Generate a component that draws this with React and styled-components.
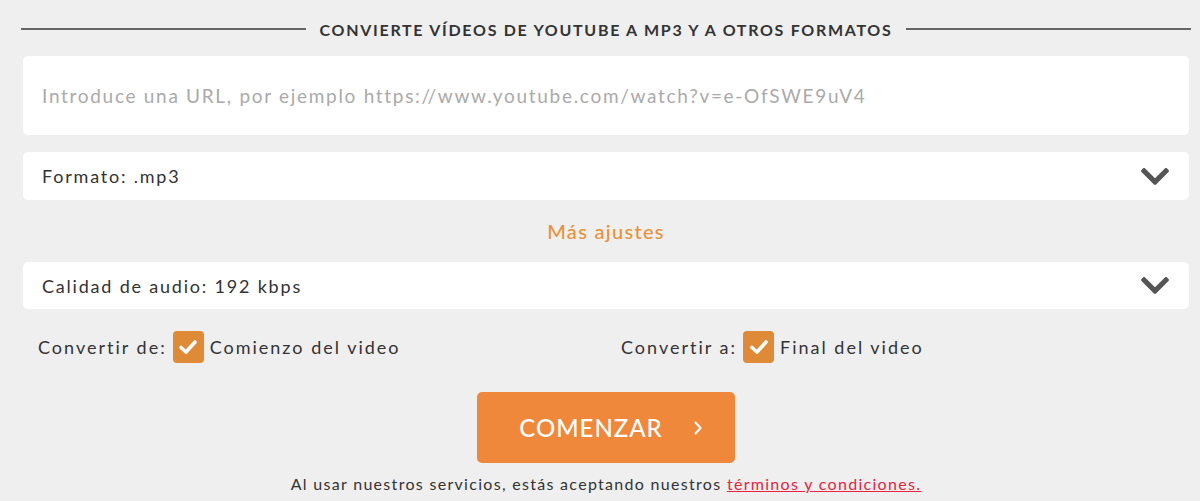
import React from "react";
import styled, { createGlobalStyle } from "styled-components";

const GlobalStyle = createGlobalStyle`
  html, body { margin: 0; padding: 0; background: #efefef; }
  body { font-family: Lato, "Open Sans", "Liberation Sans", sans-serif; color: #333; }
  * { box-sizing: border-box; }
`;

const Page = styled.div`
  padding: 19px 11px 0 23px;
  width: 1200px;
`;

const HeadingRow = styled.div`
  display: flex;
  align-items: center;
  gap: 14px;
  margin: 0 -2px;
  height: 20px;
`;

const Rule = styled.span`
  flex: 1;
  height: 2px;
  background: #666;
`;

const Heading = styled.h2`
  margin: 0;
  font-size: 16px;
  font-weight: 700;
  letter-spacing: 1.7px;
  color: #333;
  text-transform: uppercase;
  white-space: nowrap;
`;

const UrlBox = styled.div`
  margin-top: 17px;
  height: 79px;
  background: #fff;
  border-radius: 5px;
  display: flex;
  align-items: center;
  padding: 0 19px;
`;

const UrlInput = styled.input`
  flex: 1;
  border: 0;
  outline: 0;
  background: transparent;
  font-family: inherit;
  font-size: 19px;
  letter-spacing: 1.7px;
  color: #333;
  padding: 0;
  &::placeholder { color: #aaa; opacity: 1; }
`;

const Select = styled.div`
  margin-top: ${p => p.$mt}px;
  height: ${p => p.$h}px;
  background: #fff;
  border-radius: 5px;
  display: flex;
  align-items: center;
  justify-content: space-between;
  padding: 0 20px 0 19px;
  font-size: 18px;
  letter-spacing: 1.8px;
  color: #333;
`;

const MoreSettings = styled.div`
  margin-top: 19px;
  height: 24px;
  line-height: 24px;
  text-align: center;
  color: #e8923a;
  font-size: 20px;
  letter-spacing: 1.3px;
  font-weight: 500;
`;

const OptionsRow = styled.div`
  margin-top: 22px;
  display: grid;
  grid-template-columns: 1fr 1fr;
`;

const Option = styled.div`
  display: flex;
  align-items: center;
  font-size: 18px;
  letter-spacing: 2px;
  color: #333;
  padding-left: 15px;
`;

const Box = styled.span`
  width: 31px;
  height: 32px;
  border-radius: 4px;
  background: #df8a36;
  display: inline-flex;
  align-items: center;
  justify-content: center;
  margin: 0 6px 0 6px;
`;

const ButtonWrap = styled.div`
  margin-top: 29px;
  display: flex;
  justify-content: center;
`;

const StartButton = styled.button`
  width: 258px;
  height: 71px;
  border: 0;
  border-radius: 5px;
  background: #f0883b;
  color: #fff;
  font-family: inherit;
  font-size: 24px;
  letter-spacing: 1px;
  font-weight: 500;
  display: flex;
  align-items: center;
  justify-content: center;
  gap: 30px;
  padding: 0 0 0 10px;
`;

const Footer = styled.p`
  margin: 11px 0 0;
  line-height: 20px;
  text-align: center;
  font-size: 16px;
  letter-spacing: 1.3px;
  color: #333;
`;

const TermsLink = styled.a`
  color: #e8233f;
  text-decoration: underline;
`;

const Chevron = () => (
  <svg width="28" height="17" viewBox="5 123 438 266" aria-hidden="true">
    <path
      fill="#555"
      d="M207.029 381.476L12.686 187.132c-9.373-9.373-9.373-24.569 0-33.941l22.667-22.667c9.357-9.357 24.522-9.375 33.901-.04L224 284.505l154.745-154.021c9.379-9.335 24.544-9.317 33.901.04l22.667 22.667c9.373 9.373 9.373 24.569 0 33.941L240.971 381.476c-9.373 9.372-24.569 9.372-33.942 0z"
    />
  </svg>
);

const Check = () => (
  <svg width="20" height="16" viewBox="0 0 20 16" aria-hidden="true">
    <polyline points="3,8.5 8,13 17,3" fill="none" stroke="#fff" strokeWidth="3.6" strokeLinecap="round" strokeLinejoin="round" />
  </svg>
);

const Arrow = () => (
  <svg width="10" height="16" viewBox="0 0 10 16" aria-hidden="true">
    <polyline points="2.5,2.5 7.5,8 2.5,13.5" fill="none" stroke="#fff" strokeWidth="2" strokeLinecap="round" strokeLinejoin="round" />
  </svg>
);

export default function App() {
  return (
    <>
      <GlobalStyle />
      <Page>
        <HeadingRow>
          <Rule />
          <Heading>Convierte vídeos de YouTube a MP3 y a otros formatos</Heading>
          <Rule />
        </HeadingRow>
        <UrlBox>
          <UrlInput placeholder="Introduce una URL, por ejemplo https://www.youtube.com/watch?v=e-OfSWE9uV4" />
        </UrlBox>
        <Select $mt={17} $h={48}>
          <span>Formato: .mp3</span>
          <Chevron />
        </Select>
        <MoreSettings>Más ajustes</MoreSettings>
        <Select $mt={19} $h={47}>
          <span>Calidad de audio: 192 kbps</span>
          <Chevron />
        </Select>
        <OptionsRow>
          <Option>
            Convertir de:<Box><Check /></Box>Comienzo del video
          </Option>
          <Option>
            Convertir a:<Box><Check /></Box>Final del video
          </Option>
        </OptionsRow>
        <ButtonWrap>
          <StartButton>
            <span>COMENZAR</span>
            <Arrow />
          </StartButton>
        </ButtonWrap>
        <Footer>
          Al usar nuestros servicios, estás aceptando nuestros{" "}
          <TermsLink href="#">términos y condiciones.</TermsLink>
        </Footer>
      </Page>
    </>
  );
}
